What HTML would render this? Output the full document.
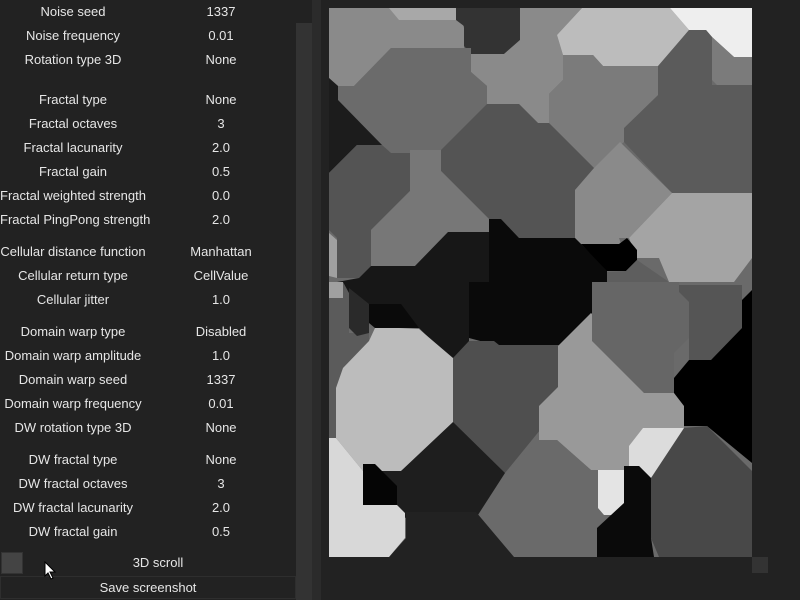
<!DOCTYPE html>
<html><head><meta charset="utf-8"><style>
html,body{margin:0;padding:0;background:#222;width:800px;height:600px;overflow:hidden;font-family:"Liberation Sans","DejaVu Sans",sans-serif;font-size:13px;color:#e6e6e6}
.r{position:absolute;left:0;width:295px;height:20px;line-height:20px}
.l{position:absolute;left:0;width:146px;text-align:center;white-space:nowrap}
.v{position:absolute;left:146px;width:150px;text-align:center}
</style></head><body>
<div style="position:absolute;left:296px;top:23px;width:16px;height:577px;background:#333"></div>
<div style="position:absolute;left:312px;top:0;width:9px;height:600px;background:#2b2b2b"></div>
<div class="r" style="top:2px"><span class="l">Noise seed</span><span class="v">1337</span></div>
<div class="r" style="top:26px"><span class="l">Noise frequency</span><span class="v">0.01</span></div>
<div class="r" style="top:50px"><span class="l">Rotation type 3D</span><span class="v">None</span></div>
<div class="r" style="top:90px"><span class="l">Fractal type</span><span class="v">None</span></div>
<div class="r" style="top:114px"><span class="l">Fractal octaves</span><span class="v">3</span></div>
<div class="r" style="top:138px"><span class="l">Fractal lacunarity</span><span class="v">2.0</span></div>
<div class="r" style="top:162px"><span class="l">Fractal gain</span><span class="v">0.5</span></div>
<div class="r" style="top:186px"><span class="l">Fractal weighted strength</span><span class="v">0.0</span></div>
<div class="r" style="top:210px"><span class="l">Fractal PingPong strength</span><span class="v">2.0</span></div>
<div class="r" style="top:242px"><span class="l">Cellular distance function</span><span class="v">Manhattan</span></div>
<div class="r" style="top:266px"><span class="l">Cellular return type</span><span class="v">CellValue</span></div>
<div class="r" style="top:290px"><span class="l">Cellular jitter</span><span class="v">1.0</span></div>
<div class="r" style="top:322px"><span class="l">Domain warp type</span><span class="v">Disabled</span></div>
<div class="r" style="top:346px"><span class="l">Domain warp amplitude</span><span class="v">1.0</span></div>
<div class="r" style="top:370px"><span class="l">Domain warp seed</span><span class="v">1337</span></div>
<div class="r" style="top:394px"><span class="l">Domain warp frequency</span><span class="v">0.01</span></div>
<div class="r" style="top:418px"><span class="l">DW rotation type 3D</span><span class="v">None</span></div>
<div class="r" style="top:450px"><span class="l">DW fractal type</span><span class="v">None</span></div>
<div class="r" style="top:474px"><span class="l">DW fractal octaves</span><span class="v">3</span></div>
<div class="r" style="top:498px"><span class="l">DW fractal lacunarity</span><span class="v">2.0</span></div>
<div class="r" style="top:522px"><span class="l">DW fractal gain</span><span class="v">0.5</span></div>
<div style="position:absolute;left:1px;top:552px;width:20px;height:20px;background:#444;border:1px solid #333"></div>
<div style="position:absolute;left:0;top:553px;width:316px;height:20px;line-height:20px;text-align:center">3D scroll</div>
<div style="position:absolute;left:0;top:576px;width:294px;height:21px;line-height:21px;text-align:center;border:1px solid #2e2e2e;background:#222">Save screenshot</div>
<svg style="position:absolute;left:44px;top:561px" width="14" height="20"><path d="M1 1 L1 15 L4 12 L7 18 L9 17 L6 11 L11 11 Z" fill="#fff" stroke="#000" stroke-width="1"/></svg>
<div style="position:absolute;left:752px;top:557px;width:16px;height:16px;background:#333"></div>
<svg style="position:absolute;left:329px;top:8px" width="423" height="549" viewBox="0 0 423 549">
<rect width="423" height="549" fill="#6a6a6a"/>
<polygon fill="#8a8a8a" points="0,0 127,0 135,20 135,40 62,40 25,78 9,78 0,70"/>
<polygon fill="#a8a8a8" points="60,0 127,0 127,12 70,12"/>
<polygon fill="#333" points="127,0 191,0 191,32 175,46 142,46 135,38 135,18 127,12"/>
<polygon fill="#8a8a8a" points="191,0 253,0 228,27 234,47 234,72 220,86 220,115 209,115 190,96 158,96 158,78 142,64 142,46 175,46 191,32"/>
<polygon fill="#bcbcbc" points="253,0 341,0 360,22 330,58 274,58 264,47 234,47 228,27"/>
<polygon fill="#eee" points="341,0 423,0 423,49 405,49 383,29 377,22 360,22"/>
<polygon fill="#5b5b5b" points="360,22 377,22 383,29 383,77 423,77 423,185 343,185 295,134 295,120 329,87 329,58"/>
<polygon fill="#7b7b7b" points="383,29 405,49 423,49 423,77 388,77 383,72"/>
<polygon fill="#7b7b7b" points="234,47 264,47 274,58 329,58 329,87 295,120 295,134 265,160 220,115 220,86 234,72"/>
<polygon fill="#6b6b6b" points="62,40 142,40 142,64 158,78 158,96 112,142 82,142 82,145 62,145 53,137 9,92 9,78 25,78"/>
<polygon fill="#1c1c1c" points="0,70 9,78 9,92 53,137 28,137 0,165"/>
<polygon fill="#545454" points="158,96 190,96 209,115 220,115 265,160 265,163 246,182 246,230 190,230 172,211 160,211 112,163 112,142"/>
<polygon fill="#8a8a8a" points="265,160 291,134 343,185 300,230 290,230 292,236 252,236 246,230 246,182"/>
<polygon fill="#a4a4a4" points="343,185 423,185 423,250 405,274 340,274 330,250 308,250 300,230"/>
<polygon fill="#545454" points="0,165 28,137 53,137 62,145 81,145 81,183 42,222 42,258 30,270 8,270 8,230 0,222"/>
<polygon fill="#777" points="81,142 112,142 112,163 160,211 160,224 119,224 86,258 42,258 42,222 81,183"/>
<polygon fill="#a0a0a0" points="0,225 8,232 8,270 0,268"/>
<polygon fill="#171717" points="42,258 86,258 119,224 160,224 160,274 8,274 30,270"/>
<polygon fill="#0a0a0a" points="160,211 172,211 190,230 246,230 278,262 278,274 160,274"/>
<polygon fill="#000" points="252,236 290,236 298,230 308,242 308,252 297,263 278,263"/>
<polygon fill="#5e5e5e" points="278,264 297,263 308,252 340,274 278,274"/>
<rect y="274" width="423" height="275" fill="#6a6a6a"/>
<polygon fill="#5b5b5b" points="0,274 20,274 20,325 40,325 40,335 14,360 7,380 7,430 0,430"/>
<polygon fill="#a0a0a0" points="0,274 14,274 14,290 0,290"/>
<polygon fill="#171717" points="14,274 155,274 140,290 140,350 120,350 90,320 46,320 40,300 20,285"/>
<polygon fill="#2a2a2a" points="20,280 40,296 40,325 28,328 20,320"/>
<polygon fill="#0a0a0a" points="140,274 279,274 279,290 230,338 170,338 140,330"/>
<polygon fill="#0a0a0a" points="40,296 72,296 90,320 46,320 40,315"/>
<polygon fill="#bcbcbc" points="14,360 40,333 46,320 70,320 90,321 124,350 124,422 72,463 34,463 7,430 7,380"/>
<polygon fill="#4f4f4f" points="124,350 140,333 165,333 170,337 262,337 262,347 229,380 229,400 176,465 167,465 124,422"/>
<polygon fill="#999" points="263,306 315,385 355,385 355,420 300,462 262,462 228,432 210,432 210,398 229,379 229,338 262,305"/>
<polygon fill="#666" points="263,274 350,274 350,284 360,294 360,330 345,345 345,385 315,385 263,333"/>
<polygon fill="#555" points="350,277 413,277 413,320 382,352 360,352 360,294 350,284"/>
<polygon fill="#000" points="413,292 423,282 423,455 378,418 355,418 355,398 345,385 345,370 360,352 382,352 413,320"/>
<polygon fill="#dcdcdc" points="300,438 314,420 355,420 355,437 322,470 310,458 300,458"/>
<polygon fill="#6a6a6a" points="176,465 210,432 228,432 262,462 269,462 269,500 275,507 290,507 268,530 268,549 185,549 147,510"/>
<polygon fill="#e4e4e4" points="269,462 295,462 295,507 275,507 269,500"/>
<polygon fill="#0a0a0a" points="295,458 310,458 322,470 322,530 325,549 268,549 268,520 295,495"/>
<polygon fill="#484848" points="322,470 355,420 378,418 423,463 423,549 330,549 322,530"/>
<polygon fill="#1e1e1e" points="34,463 72,463 124,414 176,465 147,510 77,510 68,505 46,505 34,490"/>
<polygon fill="#050505" points="34,456 46,456 68,478 68,497 34,497"/>
<polygon fill="#222" points="77,504 147,504 185,549 60,549 77,530"/>
<polygon fill="#d8d8d8" points="0,430 7,430 34,463 34,497 68,497 76,505 76,530 60,549 0,549"/>
</svg>
</body></html>
